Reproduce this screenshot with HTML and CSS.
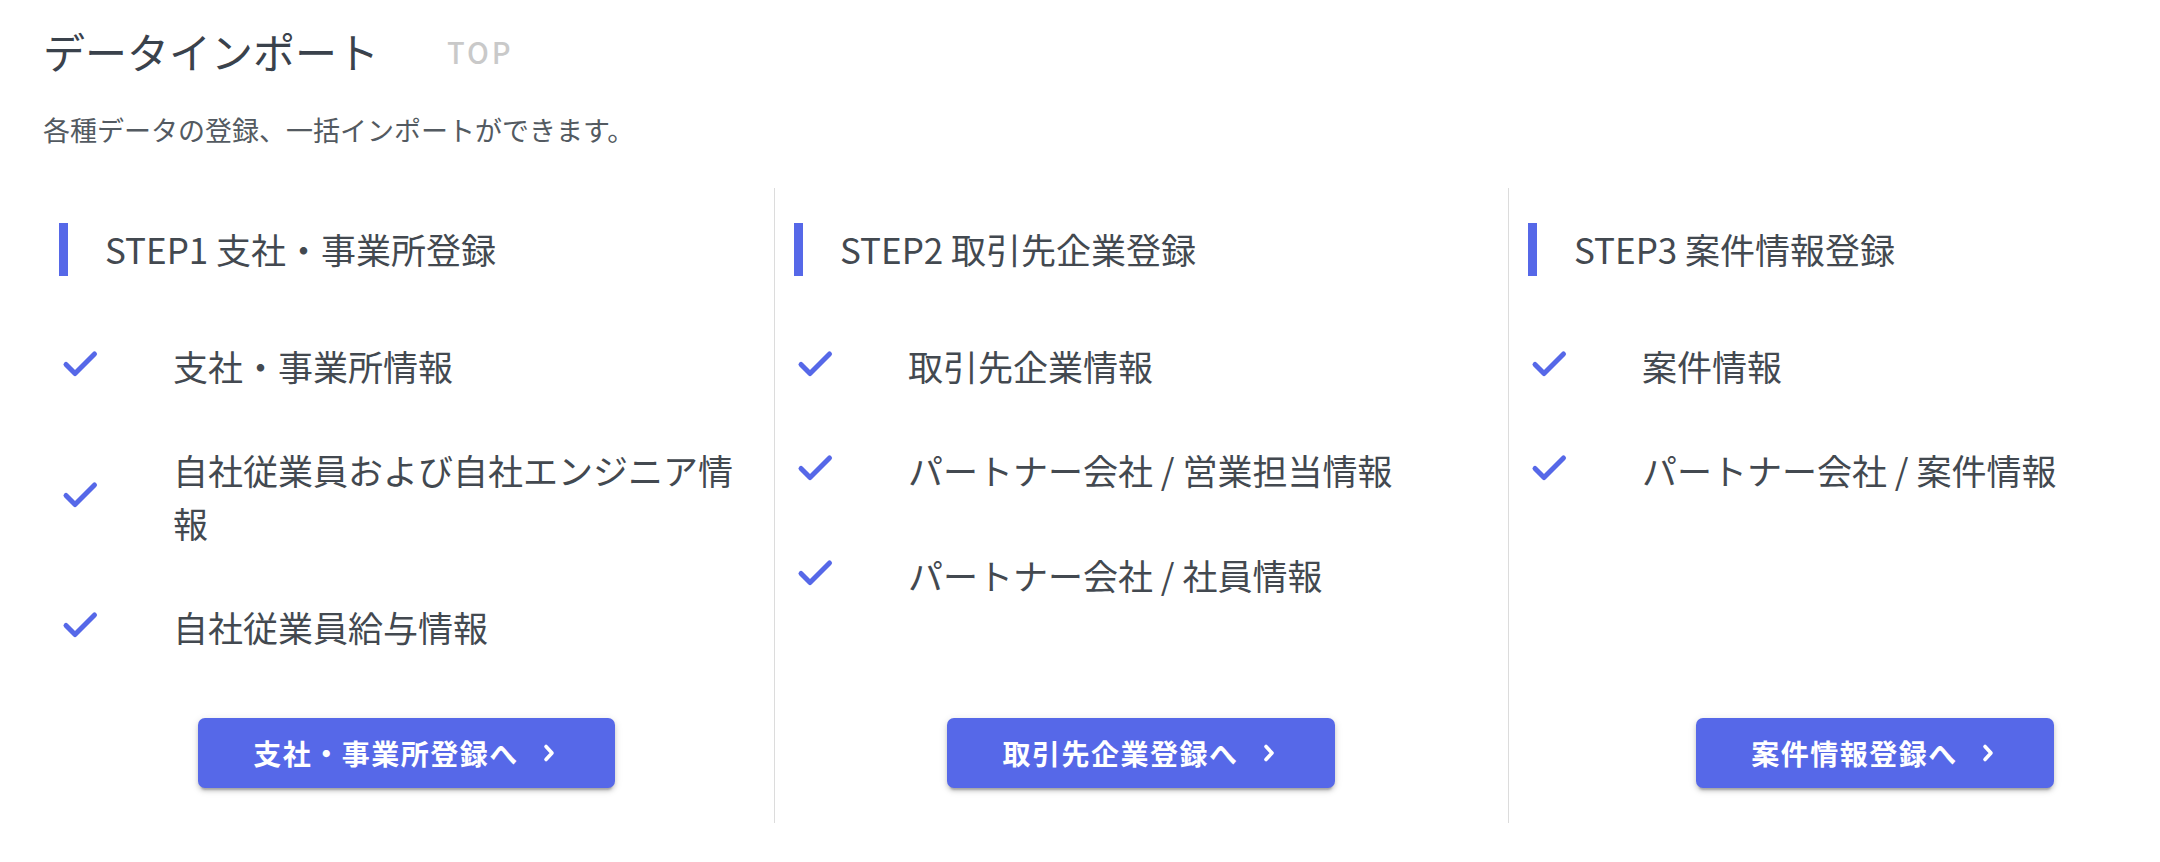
FILE: index.html
```html
<!DOCTYPE html>
<html lang="ja">
<head>
<meta charset="utf-8">
<title>データインポート</title>
<link rel="stylesheet" href="styles.css">
</head>
<body>
<div class="page">
  <header class="header">
    <div class="title-row">
      <h1 class="title">データインポート</h1>
      <span class="crumb">TOP</span>
    </div>
    <p class="subtitle">各種データの登録、一括インポートができます。</p>
  </header>

  <div class="steps">
    <section class="step">
      <h2 class="step-title">STEP1 支社・事業所登録</h2>
      <ul class="items">
        <li class="item"><svg class="check" viewBox="0 0 42 42"><path d="M7 19.5L16 28.5L35.5 9"/></svg><span class="item-text">支社・事業所情報</span></li>
        <li class="item"><svg class="check" viewBox="0 0 42 42"><path d="M7 19.5L16 28.5L35.5 9"/></svg><span class="item-text">自社従業員および自社エンジニア情報</span></li>
        <li class="item"><svg class="check" viewBox="0 0 42 42"><path d="M7 19.5L16 28.5L35.5 9"/></svg><span class="item-text">自社従業員給与情報</span></li>
      </ul>
      <div class="actions">
        <button class="btn"><span class="btn-label">支社・事業所登録へ</span><svg class="chev" viewBox="0 0 28 28"><path d="M11 7.5L17 14L11 20.5"/></svg></button>
      </div>
    </section>

    <section class="step">
      <h2 class="step-title">STEP2 取引先企業登録</h2>
      <ul class="items">
        <li class="item"><svg class="check" viewBox="0 0 42 42"><path d="M7 19.5L16 28.5L35.5 9"/></svg><span class="item-text">取引先企業情報</span></li>
        <li class="item"><svg class="check" viewBox="0 0 42 42"><path d="M7 19.5L16 28.5L35.5 9"/></svg><span class="item-text">パートナー会社 / 営業担当情報</span></li>
        <li class="item"><svg class="check" viewBox="0 0 42 42"><path d="M7 19.5L16 28.5L35.5 9"/></svg><span class="item-text">パートナー会社 / 社員情報</span></li>
      </ul>
      <div class="actions">
        <button class="btn"><span class="btn-label">取引先企業登録へ</span><svg class="chev" viewBox="0 0 28 28"><path d="M11 7.5L17 14L11 20.5"/></svg></button>
      </div>
    </section>

    <section class="step">
      <h2 class="step-title">STEP3 案件情報登録</h2>
      <ul class="items">
        <li class="item"><svg class="check" viewBox="0 0 42 42"><path d="M7 19.5L16 28.5L35.5 9"/></svg><span class="item-text">案件情報</span></li>
        <li class="item"><svg class="check" viewBox="0 0 42 42"><path d="M7 19.5L16 28.5L35.5 9"/></svg><span class="item-text">パートナー会社 / 案件情報</span></li>
      </ul>
      <div class="actions">
        <button class="btn"><span class="btn-label">案件情報登録へ</span><svg class="chev" viewBox="0 0 28 28"><path d="M11 7.5L17 14L11 20.5"/></svg></button>
      </div>
    </section>
  </div>
</div>
</body>
</html>
```

FILE: styles.css
```css
* { box-sizing: border-box; }

html, body {
  margin: 0;
  padding: 0;
  background: #ffffff;
  overflow: hidden;
}

body {
  font-family: "Noto Sans CJK JP", "Noto Sans", sans-serif;
  color: #454b52;
  width: 2160px;
  height: 862px;
}

.page {
  padding: 0 0 0 40px;
  width: 2260px;
}

.header {
  padding: 19px 0 0 3px;
}

.title-row {
  display: flex;
  align-items: center;
}

.title {
  margin: 0;
  font-size: 42px;
  font-weight: 400;
  line-height: 63px;
  color: #3a424c;
}

.crumb {
  margin-left: 68px;
  font-size: 29px;
  font-weight: 500;
  letter-spacing: 3px;
  color: #c9c9c9;
  line-height: 40px;
}

.subtitle {
  margin: 28px 0 0 0;
  font-size: 27px;
  line-height: 40px;
  color: #535a61;
}

.steps {
  display: grid;
  grid-template-columns: 734px 734px 734px;
  margin-top: 38px;
}

.step {
  display: flex;
  flex-direction: column;
  padding: 35px 20px 35px 19px;
}

.step + .step {
  border-left: 1px solid #dcdcdc;
}

.step-title {
  margin: 0;
  border-left: 9px solid #5668e8;
  padding-left: 37px;
  font-size: 35px;
  font-weight: 400;
  line-height: 52.5px;
  color: #434950;
}

.items {
  list-style: none;
  margin: 38px 0 0 0;
  padding: 0;
}

.item {
  display: flex;
  align-items: center;
  padding: 26px 0;
}

.check {
  flex: none;
  width: 42px;
  height: 42px;
  fill: none;
  stroke: #5668e8;
  stroke-width: 5;
  stroke-linecap: round;
  stroke-linejoin: round;
}

.item-text {
  margin-left: 72px;
  font-size: 35px;
  line-height: 52.5px;
  color: #434950;
}

.actions {
  margin-top: auto;
  padding-top: 38px;
  display: flex;
  justify-content: center;
}

.btn {
  display: flex;
  align-items: center;
  height: 70px;
  padding: 0 52px 0 55px;
  border: none;
  border-radius: 7px;
  background: #5668e8;
  color: #ffffff;
  font-family: "Noto Sans CJK JP", "Noto Sans", sans-serif;
  font-size: 28px;
  font-weight: 700;
  letter-spacing: 1.5px;
  box-shadow: 0 5px 2px -3px rgba(0,0,0,0.2), 0 3px 4px 0 rgba(0,0,0,0.14), 0 2px 9px 0 rgba(0,0,0,0.12);
  cursor: pointer;
}

.btn-label {
  line-height: 40px;
}

.chev {
  flex: none;
  width: 28px;
  height: 28px;
  margin-left: 16px;
  fill: none;
  stroke: #ffffff;
  stroke-width: 3.6;
  stroke-linecap: round;
  stroke-linejoin: round;
}
```
